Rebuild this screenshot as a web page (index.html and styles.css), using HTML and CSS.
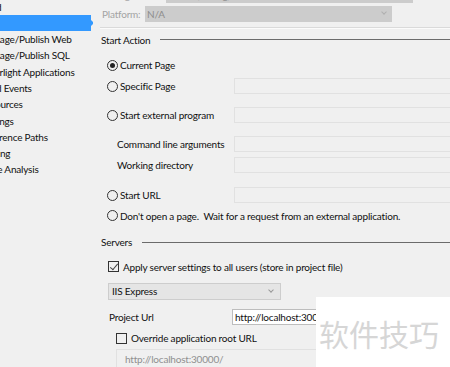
FILE: index.html
```html
<!DOCTYPE html>
<html>
<head>
	<title>Web</title>
	<link rel="stylesheet" href="styles.css">
</head>
<body>
<div class="window">
	<ul class="nav">
		<li>Build</li>
		<li class="on">Web</li>
		<li>Package/Publish Web</li>
		<li>Package/Publish SQL</li>
		<li>Silverlight Applications</li>
		<li>Build Events</li>
		<li>Resources</li>
		<li>Settings</li>
		<li>Reference Paths</li>
		<li>Signing</li>
		<li>Code Analysis</li>
	</ul>

	<div class="page">
		<div class="cfg cfg-first">
			<span class="cfg-label wide">Configuration:</span>
			<span class="cfg-select">Active (Debug)</span>
		</div>
		<div class="cfg">
			<span class="cfg-label">Platform:</span>
			<span class="cfg-select">N/A<i class="chev"></i></span>
		</div>
		<div class="rule"></div>

		<div class="group"><span>Start Action</span></div>

		<div class="row gap10">
			<label class="opt"><b class="radio checked"></b>Current Page</label>
		</div>
		<div class="row gap5">
			<label class="opt col1"><b class="radio"></b>Specific Page</label>
			<span class="field"></span>
		</div>
		<div class="row gap13">
			<label class="opt col1"><b class="radio"></b>Start external program</label>
			<span class="field"></span>
		</div>
		<div class="row gap13">
			<span class="col1 sub">Command line arguments</span>
			<span class="field"></span>
		</div>
		<div class="row gap5">
			<span class="col1 sub">Working directory</span>
			<span class="field"></span>
		</div>
		<div class="row gap14">
			<label class="opt col1"><b class="radio"></b>Start URL</label>
			<span class="field"></span>
		</div>
		<div class="row gap5">
			<label class="opt"><b class="radio"></b>Don't open a page.&nbsp; Wait for a request from an external application.</label>
		</div>

		<div class="group gap11"><span>Servers</span></div>

		<div class="row gap9 in1">
			<label class="opt"><b class="check checked"></b>Apply server settings to all users (store in project file)</label>
		</div>
		<div class="combo">IIS Express<i class="chev"></i></div>
		<div class="row gap9 in1">
			<span class="url-label">Project Url</span>
			<span class="field live">http://localhost:30000/</span>
		</div>
		<div class="row gap6 in2">
			<label class="opt"><b class="check"></b>Override application root URL</label>
		</div>
		<div class="field root">http://localhost:30000/</div>
	</div>

	<div class="mark">软件技巧</div>
</div>
</body>
</html>
```

FILE: styles.css
```css
*{margin: 0; padding: 0; box-sizing: border-box;}
html, body{ width: 450px; height: 367px; overflow: hidden; }
body{
	background: #f0f0f0;
	font-family: Lato, "Noto Sans", sans-serif;
	font-size: 10px;
	letter-spacing: -0.2px;
	color: #111;
}
.window{
	position: relative;
	display: flex;
	height: 367px;
	overflow: hidden;
}

/* left list, scrolled so the first letters are hidden */
.nav{
	list-style: none;
	width: 93px;
	flex: none;
	margin-top: -1.5px;
	overflow: hidden;
}
.nav li{
	height: 16.3px;
	line-height: 16.3px;
	margin-left: -20px;
	white-space: nowrap;
}
.nav li.on{
	position: relative;
	margin-left: 0;
	background: #3399ff;
	color: #3399ff;
	width: 91px;
}
.nav li.on:after{
	content: '';
	position: absolute;
	right: -3px; top: 5px;
	border-left: 3px solid #3399ff;
	border-top: 3px solid transparent;
	border-bottom: 3px solid transparent;
}

.page{
	flex: 1;
	margin-left: 7px;
	display: flex;
	flex-direction: column;
	min-width: 0;
}

.cfg{ display: flex; align-items: center; height: 16px; margin-top: 3px; white-space: nowrap; }
.cfg-first{ margin-top: -13px; }
.cfg-label{ width: 45px; padding-left: 2px; color: #a3a3a3; flex: none; }
.cfg-label.wide{ width: 66px; }
.cfg-select{
	position: relative;
	width: 247px; height: 16px;
	background: #cccccc;
	color: #8d8d8d;
	padding-left: 2px;
	line-height: 16px;
}
.cfg-select .chev{ right: 6px; top: 4px; border-color: #b0b0b0; }

.chev{
	position: absolute;
	width: 4px; height: 4px;
	border-right: 1px solid #888;
	border-bottom: 1px solid #888;
	transform: rotate(45deg);
}

.rule{
	margin-top: 5px;
	height: 2px;
	border-top: 1px solid #dadada;
	border-bottom: 1px solid #fbfbfb;
	margin-right: -10px;
}

.group{
	display: flex;
	align-items: center;
	height: 16px;
	margin-top: 3px;
	padding-left: 1px;
}
.group:after{
	content: '';
	flex: 1;
	height: 1px;
	background: #6b6b6b;
	margin-left: 10px;
}
.group.gap11{ margin-top: 11px; }

.row{ display: flex; align-items: center; height: 16px; padding-left: 7px; white-space: nowrap; }
.gap5{ margin-top: 5px; }
.gap6{ margin-top: 6px; }
.gap9{ margin-top: 9px; }
.gap10{ margin-top: 10px; }
.gap13{ margin-top: 13px; }
.gap14{ margin-top: 14px; }
.in1{ padding-left: 8px; }
.in2{ padding-left: 16px; }

.col1{ width: 127px; flex: none; }
.sub{ padding-left: 10px; }

.opt{ display: flex; align-items: center; }
.radio, .check{
	flex: none;
	width: 11px; height: 11px;
	border: 1px solid #333;
	margin-right: 2px;
	position: relative;
}
.radio{ border-radius: 50%; }
.radio.checked:after{
	content: '';
	position: absolute;
	left: 2px; top: 2px;
	width: 5px; height: 5px;
	border-radius: 50%;
	background: #222;
}
.check{ margin-right: 4px; }
.check.checked:after{
	content: '';
	position: absolute;
	left: 3px; top: 0px;
	width: 3px; height: 7px;
	border-right: 1px solid #444;
	border-bottom: 1px solid #444;
	transform: rotate(40deg);
}

.field{
	flex: 1;
	height: 16px;
	border: 1px solid #e1e1e1;
	margin-right: -10px;
}
.field.live{
	background: #fff;
	border-color: #bdbdbd;
	line-height: 14px;
	padding-left: 2px;
	overflow: hidden;
}

.combo{
	position: relative;
	margin: 8px 0 0 8px;
	width: 173px; height: 17px;
	background: #e5e5e5;
	border: 1px solid #cdcdcd;
	line-height: 15px;
	padding-left: 3px;
}
.combo .chev{ right: 7px; top: 4px; border-color: #999; }

.url-label{ width: 124px; flex: none; padding-left: 1px; }

.field.root{
	flex: none;
	margin: 3px 0 0 16px;
	color: #8f8f8f;
	padding-left: 8px;
	line-height: 18px;
	height: 18px;
	border-bottom: none;
}

/* watermark over the bottom right corner */
.mark{
	position: absolute;
	left: 316px; top: 297px;
	width: 134px; height: 70px;
	background: #fff;
	color: #d6d6d6;
	font-family: "Noto Sans CJK SC", sans-serif;
	font-size: 30px;
	letter-spacing: 0;
	padding: 14px 0 0 3px;
}
```
